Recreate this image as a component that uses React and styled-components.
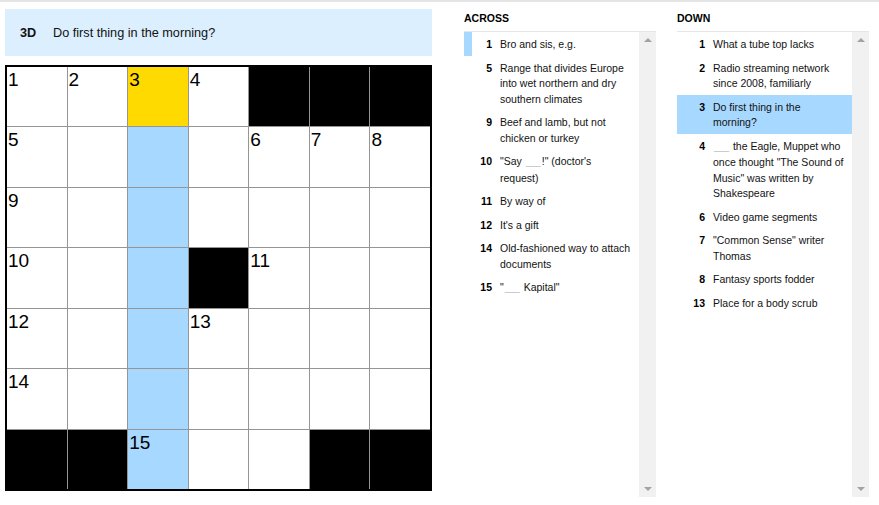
import styled, { createGlobalStyle } from 'styled-components';

const GlobalStyle = createGlobalStyle`
  html, body {
    margin: 0;
    padding: 0;
    background: #fff;
  }
  body {
    font-family: "Liberation Sans", Arial, sans-serif;
    color: #121212;
  }
`;

const YELLOW = '#ffda00';
const BLUE = '#a7d8ff';

// grid: '#' = black square, numbers are clue labels
const layout = [
  ['1', '2', '3', '4', '#', '#', '#'],
  ['5', '', '', '', '6', '7', '8'],
  ['9', '', '', '', '', '', ''],
  ['10', '', '', '#', '11', '', ''],
  ['12', '', '', '13', '', '', ''],
  ['14', '', '', '', '', '', ''],
  ['#', '#', '15', '', '', '#', '#'],
];

const across = [
  { n: 1, text: 'Bro and sis, e.g.', related: true },
  { n: 5, text: 'Range that divides Europe into wet northern and dry southern climates' },
  { n: 9, text: 'Beef and lamb, but not chicken or turkey' },
  { n: 10, text: ['"Say ', '_', '!" (doctor\'s request)'] },
  { n: 11, text: 'By way of' },
  { n: 12, text: "It's a gift" },
  { n: 14, text: 'Old-fashioned way to attach documents' },
  { n: 15, text: ['"', '_', ' Kapital"'] },
];

const down = [
  { n: 1, text: 'What a tube top lacks' },
  { n: 2, text: 'Radio streaming network since 2008, familiarly' },
  { n: 3, text: 'Do first thing in the morning?', selected: true },
  { n: 4, text: ['', '_', ' the Eagle, Muppet who once thought "The Sound of Music" was written by Shakespeare'] },
  { n: 6, text: 'Video game segments' },
  { n: 7, text: '"Common Sense" writer Thomas' },
  { n: 8, text: 'Fantasy sports fodder' },
  { n: 13, text: 'Place for a body scrub' },
];

const Page = styled.div`
  display: flex;
  border-top: 2px solid #e4e4e4;
  padding-left: 5px;
  height: 503px;
`;

const Board = styled.div`
  width: 427px;
  padding-top: 7px;
  flex-shrink: 0;
`;

const ClueBar = styled.div`
  height: 47px;
  background: #dcefff;
  display: flex;
  align-items: center;
  padding-left: 15px;
  font-size: 12.7px;
  color: #121212;
`;

const ClueBarLabel = styled.span`
  font-weight: bold;
  width: 33px;
`;

const Grid = styled.div`
  margin-top: 9px;
  box-sizing: border-box;
  width: 427px;
  height: 426px;
  border: 2px solid #000;
  background: #959595;
  display: grid;
  grid-template-columns: repeat(7, 1fr);
  grid-template-rows: repeat(7, 1fr);
  gap: 1px;
`;

const Cell = styled.div`
  background: ${p => p.$bg};
  font-size: 19px;
  line-height: 22px;
  padding: 2px 0 0 1px;
  color: #000;
`;

const Panel = styled.section`
  width: 192px;
  margin-left: ${p => p.$gap}px;
  display: flex;
  flex-direction: column;
  flex-shrink: 0;
`;

const PanelTitle = styled.h3`
  margin: 0;
  height: 30px;
  box-sizing: border-box;
  padding-top: 3px;
  display: flex;
  align-items: center;
  font-size: 10.5px;
  font-weight: bold;
  border-bottom: 1px solid #e6e6e6;
  color: #000;
`;

const ListBody = styled.div`
  display: flex;
  height: 465px;
`;

const ClueList = styled.ol`
  list-style: none;
  margin: 0;
  padding: 0;
  width: 175px;
`;

const ClueItem = styled.li`
  display: flex;
  padding: 5px 7px 3px 0;
  font-size: 10.5px;
  line-height: 15.5px;
  background: ${p => (p.$selected ? BLUE : 'transparent')};
  box-shadow: ${p => (p.$related ? `inset 8px 0 0 ${BLUE}` : 'none')};
`;

const ClueNum = styled.span`
  width: 28px;
  margin-right: 8px;
  flex-shrink: 0;
  text-align: right;
  font-weight: bold;
  color: #000;
`;

const ClueText = styled.span`
  color: #121212;
`;

const Blank = styled.span`
  display: inline-block;
  padding: 0 1px;
  font-size: 9px;
  color: #b0b0b0;
`;

const Scrollbar = styled.div`
  width: 17px;
  background: #f1f1f1;
  display: flex;
  flex-direction: column;
  justify-content: space-between;
  align-items: center;
  padding: 6px 0;
  box-sizing: border-box;
`;

const Arrow = styled.span`
  width: 0;
  height: 0;
  border-left: 4px solid transparent;
  border-right: 4px solid transparent;
  ${p => (p.$down ? 'border-top: 4px solid #a3a3a3;' : 'border-bottom: 4px solid #a3a3a3;')}
`;

const renderText = text => {
  if (typeof text === 'string') return text;
  return text.map((part, i) => (part === '_' ? <Blank key={i}>___</Blank> : part));
};

const ClueColumn = ({ title, clues, gap }) => (
  <Panel $gap={gap}>
    <PanelTitle>{title}</PanelTitle>
    <ListBody>
      <ClueList>
        {clues.map(c => (
          <ClueItem key={c.n} $selected={c.selected} $related={c.related}>
            <ClueNum>{c.n}</ClueNum>
            <ClueText>{renderText(c.text)}</ClueText>
          </ClueItem>
        ))}
      </ClueList>
      <Scrollbar>
        <Arrow />
        <Arrow $down />
      </Scrollbar>
    </ListBody>
  </Panel>
);

const cellColor = (r, c, v) => {
  if (v === '#') return '#000';
  if (r === 0 && c === 2) return YELLOW;
  if (c === 2) return BLUE;
  return '#fff';
};

export default function App() {
  return (
    <>
      <GlobalStyle />
      <Page>
        <Board>
          <ClueBar>
            <ClueBarLabel>3D</ClueBarLabel>
            Do first thing in the morning?
          </ClueBar>
          <Grid>
            {layout.map((row, r) =>
              row.map((v, c) => (
                <Cell key={`${r}-${c}`} $bg={cellColor(r, c, v)}>
                  {v !== '#' ? v : ''}
                </Cell>
              ))
            )}
          </Grid>
        </Board>
        <ClueColumn title="ACROSS" clues={across} gap={32} />
        <ClueColumn title="DOWN" clues={down} gap={21} />
      </Page>
    </>
  );
}
